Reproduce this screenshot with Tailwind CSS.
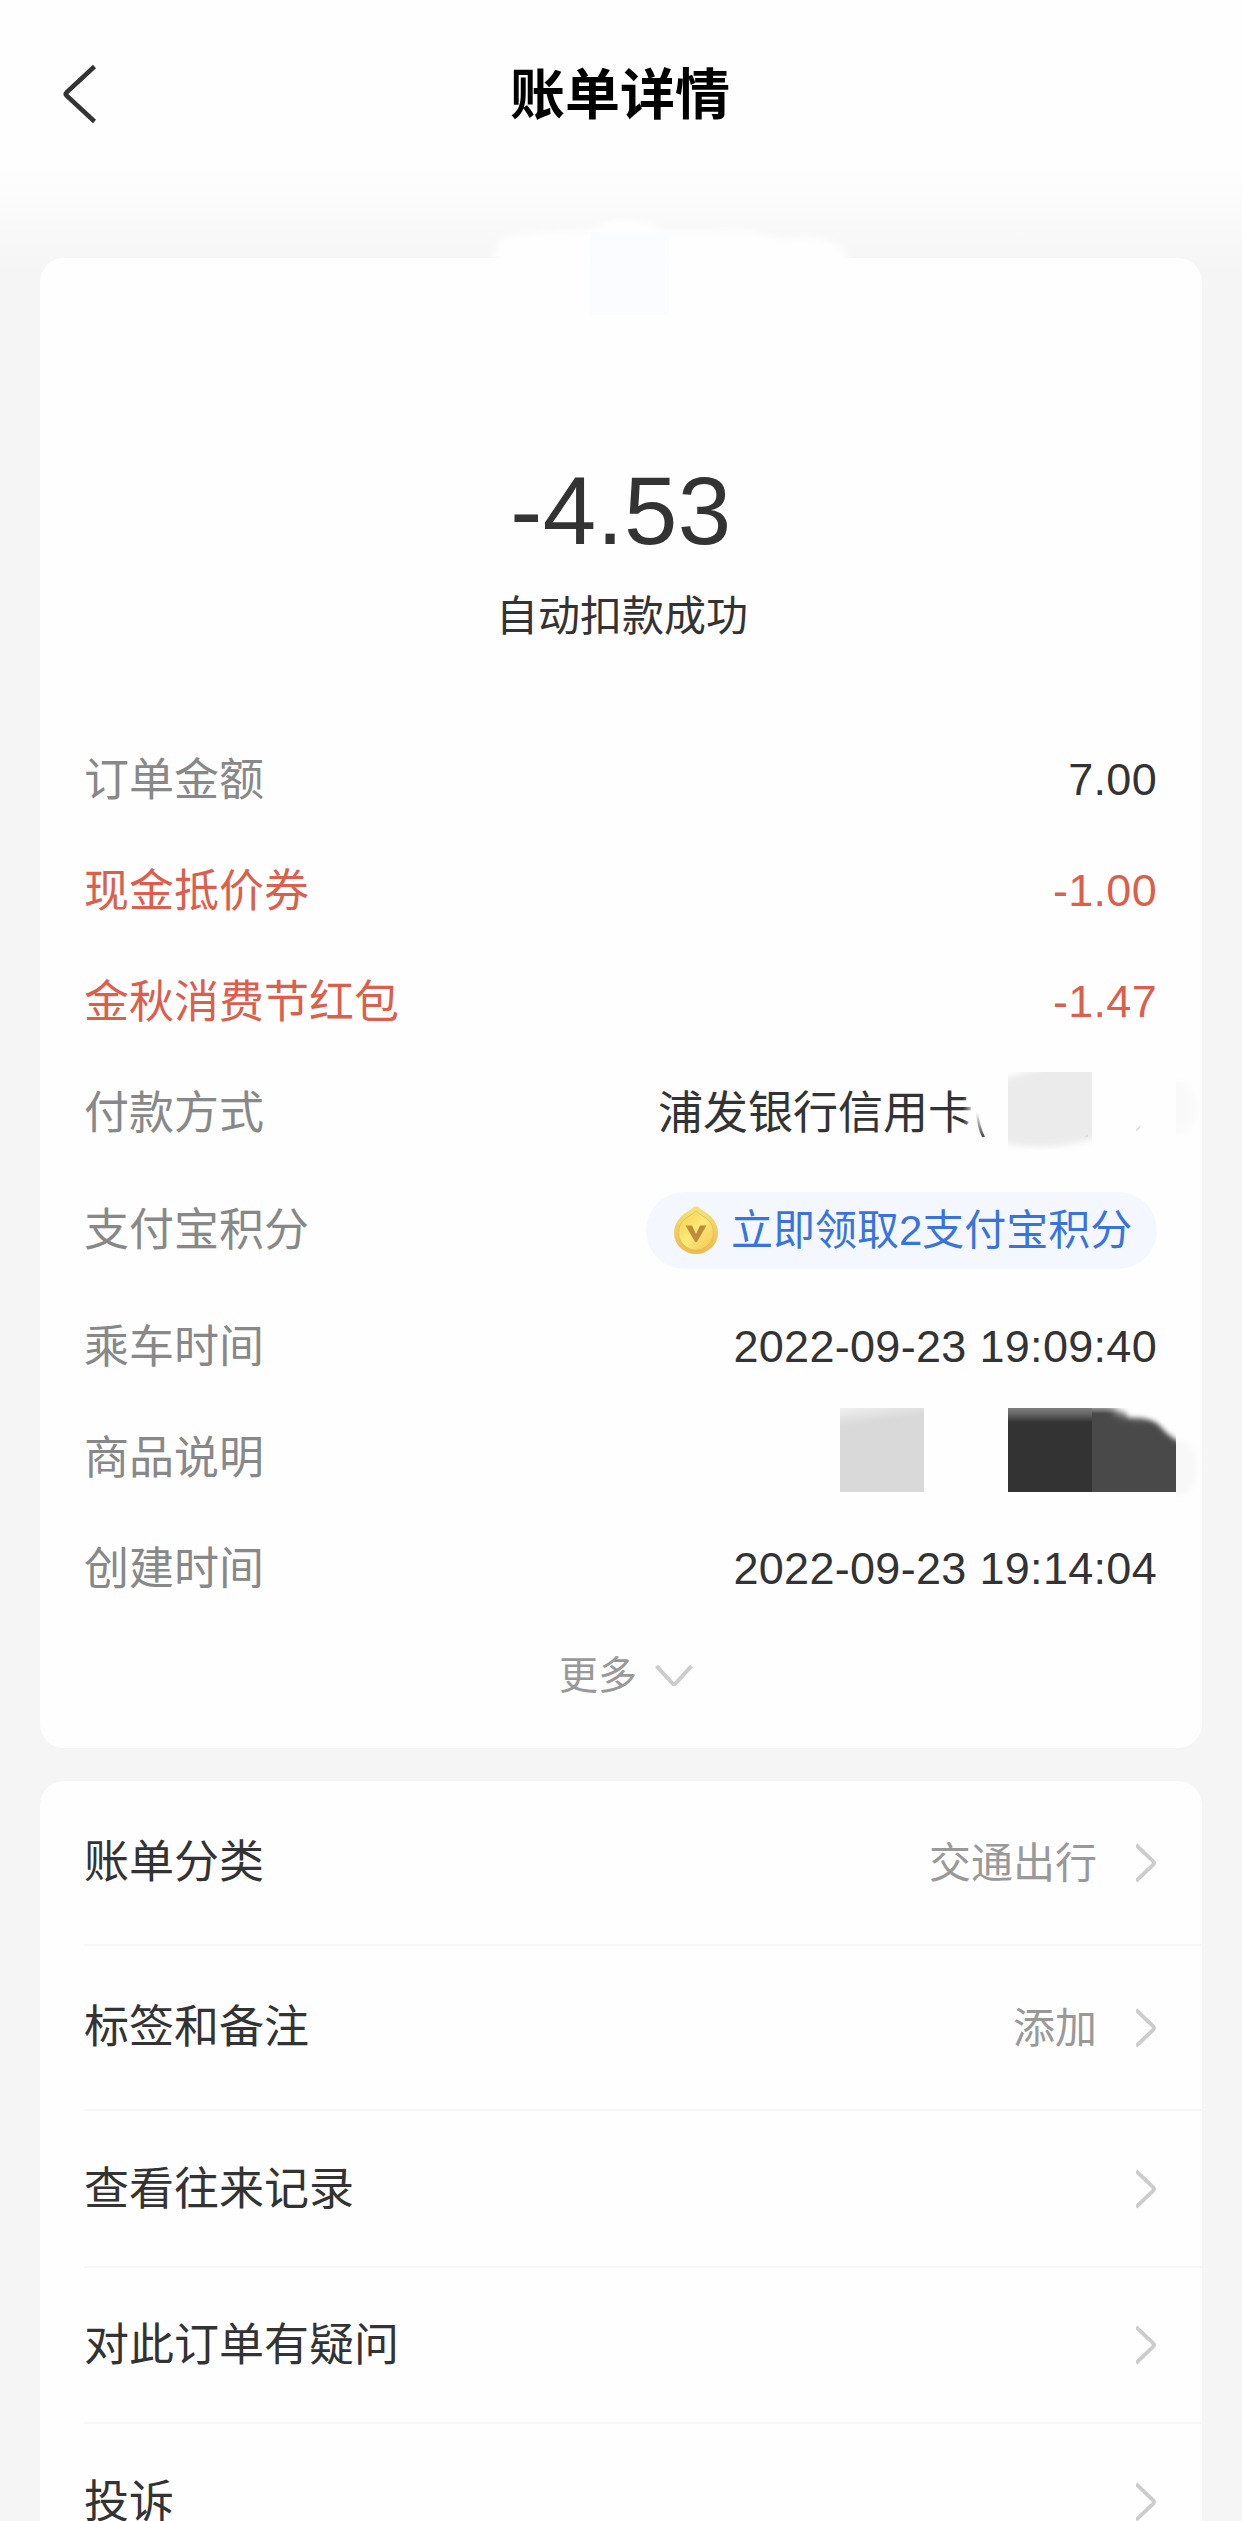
<!DOCTYPE html>
<html lang="zh-CN">
<head>
<meta charset="utf-8">
<title>账单详情</title>
<script src="https://cdn.jsdelivr.net/npm/@tailwindcss/browser@4"></script>
</head>
<body class="bg-[#f5f5f5]">
<div class="relative h-[2521px] w-[1242px] overflow-hidden bg-[#f5f5f5] bg-[linear-gradient(to_bottom,#fefefe_165px,#f5f5f5_275px)] bg-no-repeat font-['Liberation_Sans','Noto_Sans_CJK_SC',sans-serif] text-[45px] leading-[60px] text-[#333]">

  <header class="grid h-[188px] grid-cols-[200px_1fr_200px] items-center">
    <svg class="ml-[60px] h-[60px] w-[40px]" viewBox="0 0 40 60" fill="none" stroke="#333" stroke-width="4.5" stroke-linejoin="round"><path d="M34.500 2.500L6.500 28.500Q5 30 6.500 31.500L34.500 57.500"/></svg>
    <h1 class="pt-[2px] pr-[2px] text-center text-[55px] leading-[70px] font-bold text-black">账单详情</h1>
  </header>

  <main class="mx-10 mt-[70px] flex flex-col gap-[33px]">
    <section class="relative h-[1490px] rounded-[24px] bg-[#fefefe] pt-[205px]">
      <!-- merchant name, masked -->
      <svg class="absolute top-[-42px] left-[440px] h-[110px] w-[400px]" viewBox="0 0 400 110">
        <defs><filter id="soft" x="-10%" y="-20%" width="120%" height="140%"><feGaussianBlur stdDeviation="3"/></filter></defs>
        <path filter="url(#soft)" fill="#fefefe" d="M14 46Q14 20 34 18L112 14Q122 4 140 3Q170 3 180 14L270 15Q290 20 300 23Q350 18 362 32L370 46Z"/>
        <path fill="#fbfcff" d="M110 16h79v83h-79z"/>
      </svg>

      <div class="text-center text-[96px] leading-[96px] tracking-[0.5px]">-4.53</div>
      <div class="mt-[28px] pl-[2px] text-center text-[42px] leading-[60px]">自动扣款成功</div>

      <div class="mt-[77px] pr-[45px] pl-[44px]">
        <div class="flex h-[111px] items-center justify-between"><span class="pt-[2px] text-[#888]">订单金额</span><span class="tracking-[0.3px]">7.00</span></div>
        <div class="flex h-[111px] items-center justify-between text-[#dc5f4c]"><span class="pt-[2px]">现金抵价券</span><span class="tracking-[0.3px]">-1.00</span></div>
        <div class="flex h-[111px] items-center justify-between text-[#dc5f4c]"><span class="pt-[2px]">金秋消费节红包</span><span class="tracking-[0.3px]">-1.47</span></div>
        <div class="relative flex h-[111px] items-center justify-between">
          <span class="pt-[2px] text-[#888]">付款方式</span>
          <span class="mr-[184px] pt-[2px]">浦发银行信用卡</span>
          <!-- card number, masked -->
          <svg class="absolute top-0 right-[-45px] h-[111px] w-[240px]" viewBox="962 1057 240 111">
            <defs>
              <linearGradient id="paren" x1="0" y1="0" x2="0" y2="1"><stop offset="0" stop-color="#fefefe"/><stop offset="1" stop-color="#444"/></linearGradient>
              <linearGradient id="fade" x1="0" x2="1" y1="0" y2="0"><stop offset="0" stop-color="#fefefe" stop-opacity="0"/><stop offset="1" stop-color="#fefefe"/></linearGradient>
              <clipPath id="maskA"><path d="M1008 1072h84v78h-84z"/></clipPath>
              <clipPath id="maskB"><path d="M1176 1070h30v80h-30z"/></clipPath>
              <filter id="blur2" x="-20%" y="-20%" width="140%" height="140%"><feGaussianBlur stdDeviation="3"/></filter>
            </defs>
            <path fill="url(#fade)" d="M963 1095h12v30h-12z"/>
            <path fill="url(#paren)" d="M976 1112Q977 1127 982 1137H985Q980 1127 978 1112Z"/>
            <g clip-path="url(#maskA)"><path filter="url(#blur2)" fill="#ebebeb" d="M1000 1080Q1020 1073 1040 1069V1055H1110V1134Q1070 1147 1040 1147Q1015 1146 1000 1142Z"/></g>
            <path fill="#ddd" d="M1084 1137l4-3v3z"/>
            <path fill="#ddd" d="M1136 1129l5-4q-1 5-5 6z"/>
            <g clip-path="url(#maskB)"><path filter="url(#blur2)" fill="#f9f9f9" d="M1165 1082H1182Q1196 1088 1196 1110Q1194 1130 1180 1134H1165Z"/></g>
          </svg>
        </div>
        <div class="flex h-[123px] items-center justify-between">
          <span class="pt-[2px] text-[#888]">支付宝积分</span>
          <span class="mt-px flex h-[77px] w-[511px] items-center rounded-full bg-[#f4f7fe] pl-[28px] text-[42px] whitespace-nowrap text-[#3974dc]">
            <svg class="mr-[13px] h-[48px] w-[44px] shrink-0" viewBox="0 0 44 48">
              <defs>
                <linearGradient id="gold" x1="0" y1="0" x2="1" y2="1"><stop offset="0" stop-color="#f0d04e"/><stop offset=".5" stop-color="#fdea78"/><stop offset="1" stop-color="#f3c455"/></linearGradient>
                <linearGradient id="rim" x1="0" y1="0" x2="0" y2="1"><stop offset="0" stop-color="#f6e27a"/><stop offset="1" stop-color="#ecb94f"/></linearGradient>
              </defs>
              <path fill="url(#rim)" d="M19.500 1Q22 -.5 24.500 1C28 5 35 7 39 13Q44 19 44 27A22 21 0 0 1 0 27Q0 19 5 13C9 7 16 5 19.500 1Z"/>
              <path fill="url(#gold)" stroke="#dfb64a" stroke-opacity=".6" stroke-width="1" d="M22 5C26 9 32 11 36 16Q39.500 20 39.500 26.500A17.500 17.500 0 0 1 4.500 26.500Q4.500 20 8 16C12 11 18 9 22 5Z"/>
              <path fill="#bf8c3a" d="M11.500 19.500H18L22 28L26 19.500H32.500L23.200 35.500Q22 37 20.800 35.500Z"/>
            </svg><span class="pt-[2px]">立即领取2支付宝积分</span></span>
        </div>
        <div class="flex h-[111px] items-center justify-between"><span class="pt-[2px] text-[#888]">乘车时间</span><span class="tracking-[0.3px]">2022-09-23 19:09:40</span></div>
        <div class="relative flex h-[111px] items-center justify-between">
          <span class="pt-[2px] text-[#888]">商品说明</span>
          <!-- product description, masked -->
          <svg class="absolute top-0 right-[-45px] h-[111px] w-[372px]" viewBox="830 1402 372 111">
            <defs>
              <linearGradient id="g1" x1="0" x2="0.150" y1="0" y2="1"><stop offset="0" stop-color="#f0f0f0"/><stop offset=".22" stop-color="#d9d9d9"/></linearGradient>
              <linearGradient id="g2" x1="0" x2="0" y1="0" y2="1"><stop offset="0" stop-color="#808080"/><stop offset=".07" stop-color="#666"/><stop offset=".17" stop-color="#333"/></linearGradient>
              <linearGradient id="g3" x1="0" x2="0" y1="0" y2="1"><stop offset="0" stop-color="#999"/><stop offset=".08" stop-color="#777"/><stop offset=".19" stop-color="#494949"/></linearGradient>
              <clipPath id="c3"><path d="M1092 1408h84v84h-84z"/></clipPath>
              <clipPath id="c4"><path d="M1176 1430h26v72h-26z"/></clipPath>
              <filter id="b3" x="-20%" y="-20%" width="140%" height="140%"><feGaussianBlur stdDeviation="2.500"/></filter>
              <filter id="b4" x="-40%" y="-60%" width="180%" height="220%"><feGaussianBlur stdDeviation="5"/></filter>
            </defs>
            <path fill="url(#g1)" d="M840 1408h84v84h-84z"/>
            <path fill="url(#g2)" d="M1008 1408h84v84h-84z"/>
            <g clip-path="url(#c3)">
              <path fill="#494949" d="M1092 1408h84v84h-84z"/>
              <path fill="url(#g3)" d="M1092 1408h40v30h-40z"/>
              <path filter="url(#b4)" fill="#fefefe" d="M1112 1390L1116 1412L1136 1416H1160V1390Z"/>
              <path filter="url(#b3)" fill="#fefefe" d="M1124 1398L1128 1417Q1148 1414 1160 1426Q1168 1436 1180 1442H1190V1398Z"/>
            </g>
            <g clip-path="url(#c4)"><path filter="url(#b3)" fill="#f8f8f8" d="M1166 1440H1182Q1197 1448 1197 1468Q1196 1490 1182 1495H1166Z"/></g>
          </svg>
        </div>
        <div class="flex h-[111px] items-center justify-between"><span class="pt-[2px] text-[#888]">创建时间</span><span class="tracking-[0.3px]">2022-09-23 19:14:04</span></div>
      </div>

      <div class="mt-[22px] flex h-[60px] items-center justify-center gap-[18px] pl-[10px] text-[39px] text-[#999]">
        更多
        <svg class="h-[24px] w-[38px]" viewBox="0 0 38 24" fill="none" stroke="#ccc" stroke-width="4" stroke-linejoin="round"><path d="M1.500 2L17.500 19.500Q19 21 20.500 19.500L36.500 2"/></svg>
      </div>
    </section>

    <section class="h-[820px] rounded-[24px] bg-[#fefefe] pl-[44px]">
      <div class="flex h-[165px] items-center border-b-2 border-[#f7f7f7] pr-[46px]">
        <span class="grow pt-px">账单分类</span><span class="mr-[39px] pt-[2px] text-[42px] text-[#999]">交通出行</span>
        <svg class="h-[40px] w-[20px]" viewBox="0 0 20 40" fill="none" stroke="#ccc" stroke-width="3.800"><path d="M0 2L17 18Q19 20 17 22L0 38"/></svg>
      </div>
      <div class="flex h-[165px] items-center border-b-2 border-[#f7f7f7] pr-[46px]">
        <span class="grow pt-px">标签和备注</span><span class="mr-[39px] pt-[2px] text-[42px] text-[#999]">添加</span>
        <svg class="h-[40px] w-[20px]" viewBox="0 0 20 40" fill="none" stroke="#ccc" stroke-width="3.800"><path d="M0 2L17 18Q19 20 17 22L0 38"/></svg>
      </div>
      <div class="flex h-[157px] items-center border-b-2 border-[#f7f7f7] pr-[46px]">
        <span class="grow pt-[2px]">查看往来记录</span>
        <svg class="h-[40px] w-[20px]" viewBox="0 0 20 40" fill="none" stroke="#ccc" stroke-width="3.800"><path d="M0 2L17 18Q19 20 17 22L0 38"/></svg>
      </div>
      <div class="flex h-[156px] items-center border-b-2 border-[#f7f7f7] pr-[46px]">
        <span class="grow pt-[2px]">对此订单有疑问</span>
        <svg class="h-[40px] w-[20px]" viewBox="0 0 20 40" fill="none" stroke="#ccc" stroke-width="3.800"><path d="M0 2L17 18Q19 20 17 22L0 38"/></svg>
      </div>
      <div class="flex h-[156px] items-center pr-[46px]">
        <span class="grow pt-px">投诉</span>
        <svg class="h-[40px] w-[20px]" viewBox="0 0 20 40" fill="none" stroke="#ccc" stroke-width="3.800"><path d="M0 2L17 18Q19 20 17 22L0 38"/></svg>
      </div>
    </section>
  </main>
</div>
</body>
</html>
